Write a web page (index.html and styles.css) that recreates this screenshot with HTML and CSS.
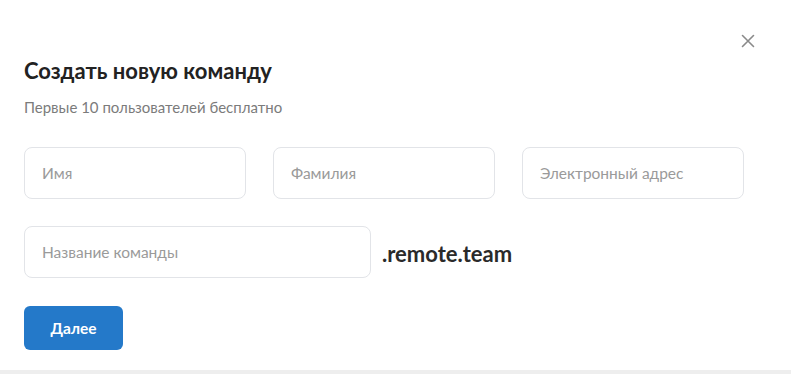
FILE: index.html
```html
<!DOCTYPE html>
<html lang="ru">
<head>
    <meta charset="UTF-8">
    <meta name="viewport" content="width=device-width, initial-scale=1.0">
    <title>Создать новую команду</title>
    <link rel="stylesheet" href="styles.css">
</head>
<body>
    <div class="modal">
        <button class="close-btn" aria-label="Закрыть">
            <svg width="14" height="14" viewBox="0 0 14 14">
                <path d="M1.5 1.5 L12.5 12.5 M12.5 1.5 L1.5 12.5" stroke="#8a8a8a" stroke-width="1.6" stroke-linecap="round"/>
            </svg>
        </button>
        <h1 class="title">Создать новую команду</h1>
        <p class="subtitle">Первые 10 пользователей бесплатно</p>

        <div class="row">
            <input class="field" type="text" placeholder="Имя">
            <input class="field" type="text" placeholder="Фамилия">
            <input class="field" type="email" placeholder="Электронный адрес">
        </div>

        <div class="row team-row">
            <input class="field team-field" type="text" placeholder="Название команды">
            <span class="domain">.remote.team</span>
        </div>

        <button class="next-btn">Далее</button>
    </div>
    <div class="bottom-line"></div>
</body>
</html>
```

FILE: styles.css
```css
body {
    font-family: Lato, "Open Sans", sans-serif;
    margin: 0;
    padding: 0;
    background-color: #fff;
    color: #222;
    height: 374px;
    display: flex;
    flex-direction: column;
}
.modal {
    position: relative;
    flex: 1;
    padding: 58px 24px 0 24px;
}
.close-btn {
    position: absolute;
    top: 34px;
    left: 741px;
    background: none;
    border: none;
    padding: 0;
    cursor: pointer;
}
.title {
    margin: 0;
    font-size: 22px;
    font-weight: 700;
    color: #222;
    line-height: 26px;
}
.subtitle {
    margin: 14px 0 0 0;
    font-size: 15px;
    color: #7b7b7b;
    line-height: 18px;
}
.row {
    display: flex;
    gap: 27px;
    margin-top: 31px;
}
.field {
    width: 222px;
    height: 52px;
    box-sizing: border-box;
    border: 1px solid #e2e4e8;
    border-radius: 8px;
    padding: 0 17px;
    font-family: Lato, sans-serif;
    font-size: 15.5px;
    color: #222;
    outline: none;
}
.field::placeholder {
    color: #9a9a9a;
}
.team-row {
    margin-top: 27px;
    align-items: center;
    gap: 11px;
}
.team-field {
    width: 347px;
}
.domain {
    font-size: 22px;
    font-weight: 700;
    color: #2a2a2a;
    margin-top: 2px;
}
.next-btn {
    margin-top: 28px;
    width: 99px;
    height: 44px;
    background-color: #2479c9;
    color: white;
    border: none;
    border-radius: 6px;
    font-family: Lato, sans-serif;
    font-size: 15.5px;
    font-weight: 700;
    cursor: pointer;
}
.next-btn:hover {
    background-color: #1c69b3;
}
.bottom-line {
    height: 4px;
    background-color: #eeeeee;
}
```
